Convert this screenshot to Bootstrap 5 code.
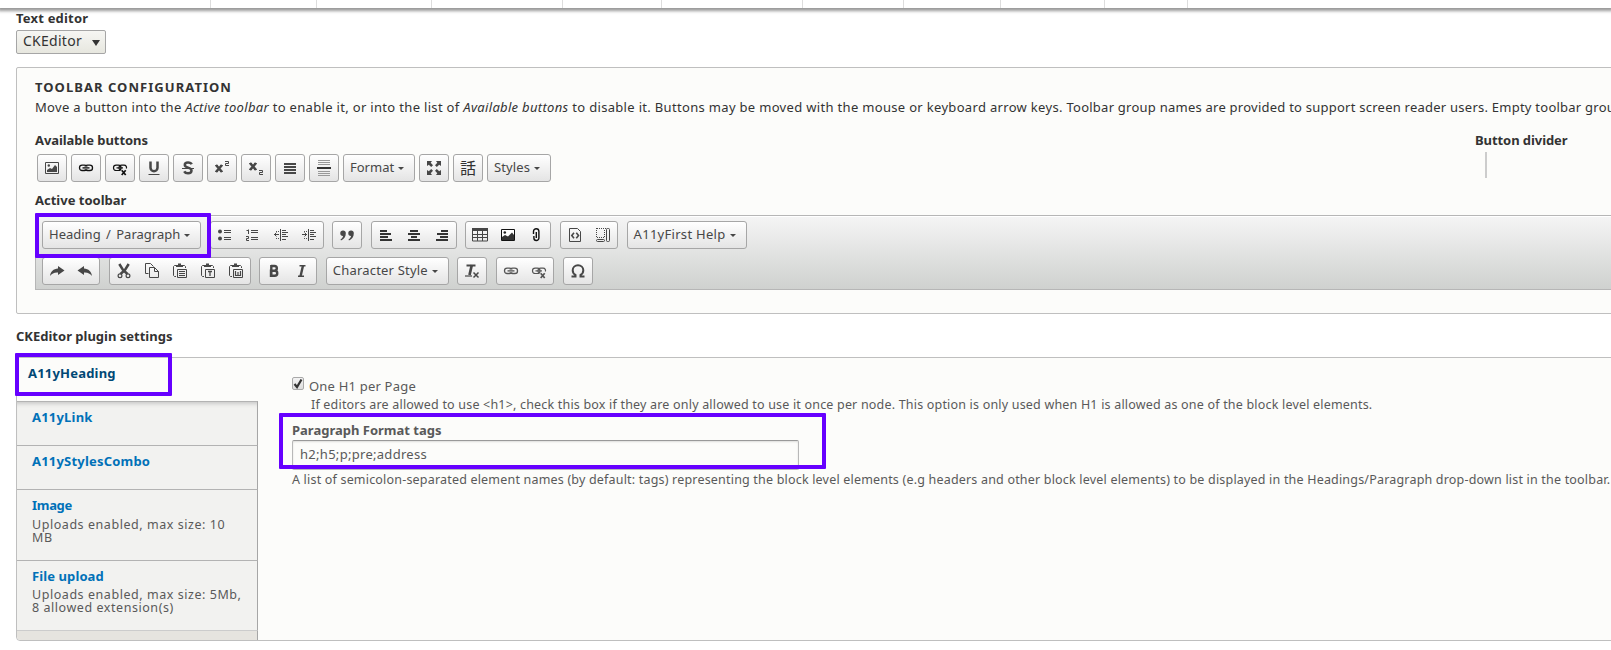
<!DOCTYPE html>
<html lang="en">
<head>
<meta charset="utf-8">
<title>Text editor configuration</title>
<link href="https://cdn.jsdelivr.net/npm/bootstrap@5.3.0/dist/css/bootstrap.min.css" rel="stylesheet">
<style>
body{font-family:"Noto Sans","Open Sans",sans-serif;font-size:13px;line-height:20px;color:#333;background:#fff;overflow:hidden;height:650px}
.top-tray{height:8px;background:#fff;box-shadow:0 1px 3px 2px #999;position:relative;z-index:2}
.top-tray span{border-right:1px solid #ddd;flex:none}
.page-body{padding-left:16px;white-space:nowrap}
.lbl{font-weight:700;font-size:13px;line-height:20px;height:20px}
.ls-caps{letter-spacing:1.046px}
.ls-1{letter-spacing:.1px}
.ls-2{letter-spacing:.2px}
.ls-3{letter-spacing:.29px}
.ls-n{letter-spacing:-.07px}
.ls-n3{letter-spacing:-.3px}
.slashed{word-spacing:2px}
.intro{letter-spacing:.322px}
.intro-tail{letter-spacing:.24px}
.editor-select{width:90px;height:24px;margin-top:2px;border:1px solid #a6a6a6;border-radius:2px;background:linear-gradient(#f6f6f3,#e7e7df);padding:0 4px 2px 6px;font-size:14px;letter-spacing:.27px}
.editor-select svg{margin-top:4px}
.config-box{margin-top:13px;height:247px;width:1620px;border:1px solid #bfbfbf;border-radius:2px;background:#fcfcfa;padding:9px 0 0 18px}
.button-pool{margin-top:13px;height:52px}
.divider-col{width:160px}
.divider-bar{width:2px;height:26px;background:#ccc;margin:2px 0 0 10px}
.ck-btn{height:28px;border:1px solid #a6a6a6;border-radius:3px;background:linear-gradient(#fff,#e4e4e4);flex:none;color:#474747}
.ck-btn svg{width:16px;height:16px;margin:0 6px;flex:none}
.ck-btn .dd{padding:0 0 2px 6px;width:100%}
.dd i{border:3px solid transparent;border-top:3px solid #474747;border-bottom:0;margin:2px 10px 0 0}
.w-64{width:64px}.w-72{width:72px}.w-120{width:120px}.w-123{width:123px}.w-159{width:159px}
.avail{gap:4px;margin:4px 0 0 2px}
.ck-bar{margin-top:5px;height:75px;border:1px solid #b6b6b6;border-right:0;background:linear-gradient(#f5f5f5,#cfd1cf);box-shadow:0 1px 0 #fff inset;padding:5px 0 0 6px;position:relative}
.ck-row{gap:8.6px;height:28px;margin-bottom:8px}
.hl{position:absolute;border:4px solid #60f;border-radius:1px;z-index:3;pointer-events:none}
.hl-combo{left:-1px;top:-3px;width:176px;height:45px}
.hl-tab{left:-2px;top:-5px;width:157px;height:43px}
.hl-field{left:-13px;top:-7px;width:547px;height:56px}
.plugin-title{margin-top:12px}
.tabs-box{margin-top:11px;width:1620px;height:284px;border:1px solid #bfbfbf;border-radius:2px 2px 2px 4px;background:#fcfcfa;position:relative}
.tab-list{width:241px;flex:none;background:#e6e4df;border-radius:0 0 0 4px}
.tab-item{height:44px;background:#f2f2f0;border-top:1px solid #b3b3b3;border-right:1px solid #a6a6a6;padding:5px 0 0 15px}
.tab-item.on{height:43px;border:0;padding-left:11px;background:#fcfcfa}
.tab-item.on+.tab-item{box-shadow:inset 0 5px 5px -4px #bbb}
.tab-item .lbl{color:#0071b8}
.tab-item.on .lbl{color:#004875}
.tab-item.tall{height:71px}
.tab-item.tall+.tall{height:70px}
.tab-note{font-size:12.5px;line-height:13px;color:#595959;margin-top:3px;letter-spacing:.55px}
.tall+.tall .tab-note{margin-top:2px}
.tab-end{height:10px;border-top:1px solid #ccc;border-right:1px solid #a6a6a6}
.panel{padding:18px 0 0 34px;color:#595959}
.chk{width:12px;height:13px;border:1px solid #a9a9a9;border-radius:2px;background:linear-gradient(#f3f3f3,#ddd);margin:1px 5px 0 0}
.chk svg{display:block}
.desc{font-size:12.5px;line-height:18px;height:16px;letter-spacing:.19px}
.desc-in{padding-left:19px}
.desc-field{margin-top:1px}
.field{margin-top:8px}
.tag-input{width:507px;height:30px;border:1px solid #b8b8b8;border-top-color:#999;border-radius:2px;background:#fcfcfa;padding:0 7px;line-height:27px;box-shadow:inset 0 1px 2px rgba(0,0,0,.125)}
</style>
</head>
<body>
<svg class="d-none">
<defs>
<g id="chain" fill="none"><rect x="1.500" y="5.200" width="7.500" height="5.300" rx="2.600" stroke-width="1.300"/><rect x="7" y="5.200" width="7.500" height="5.300" rx="2.600" stroke-width="1.300"/><path d="M4.500 7.900h7" stroke="#fff" stroke-width="2.600"/><path d="M4.500 7.900h7" stroke-width="1.400"/></g>
<g id="chain-cut" fill="none"><rect x="1.500" y="5.200" width="7.500" height="5.300" rx="2.600" stroke-width="1.200"/><path d="M8 9.800C6.300 9 6.500 5.200 9.500 5.200H12c2.200 0 3 2 2.300 3.300" stroke-width="1.200"/><path d="M4.500 7.900h6.500" stroke-width="1.200"/><path d="M9.700 10.200l4 4.800M13.700 10.200l-4 4.800" stroke-width="1.700"/></g>
</defs>
<symbol id="image" viewBox="0 0 16 16"><path d="M1.500 2.500h13v11h-13z" fill="none" stroke="#474747"/><circle cx="4.800" cy="5.500" r="1.200" fill="#474747"/><path d="M3 12v-2l3-2 2 1 3-4 2 2v5z" fill="#474747"/></symbol>
<symbol id="link" viewBox="0 0 16 16"><use href="#chain" stroke="#111"/></symbol>
<symbol id="unlink" viewBox="0 0 16 16"><use href="#chain-cut" stroke="#111"/></symbol>
<symbol id="link2" viewBox="0 0 16 16"><use href="#chain" stroke="#555"/></symbol>
<symbol id="unlink2" viewBox="0 0 16 16"><use href="#chain-cut" stroke="#555"/></symbol>
<symbol id="underline" viewBox="0 0 16 16"><path d="M4.500 1.500v6.200a3.500 3.500 0 0 0 7 0V1.500" fill="none" stroke="#474747" stroke-width="2.500"/><path d="M2.500 14.500h11" stroke="#474747"/></symbol>
<symbol id="strike" viewBox="0 0 16 16"><path d="M11.700 4.300C11 2.800 9.500 2.500 8 2.500c-2 0-3.200 1-3.200 2.500C4.800 8.300 11.500 7 11.500 10.500c0 1.800-1.500 2.800-3.500 2.800-1.600 0-3-.5-3.800-2" fill="none" stroke="#474747" stroke-width="2.500"/><path d="M2 8.500h12" stroke="#474747"/></symbol>
<symbol id="sup" viewBox="0 0 16 16"><path d="M2 5l6 7M8 5l-6 7" stroke="#474747" stroke-width="2.600"/><path d="M1.300 5.500H4M6 5.500h2.700M1.300 11.500H4M6 11.500h2.700" stroke="#474747"/><path d="M11 1.500h3.500v2h-3v2H15" fill="none" stroke="#474747"/></symbol>
<symbol id="sub" viewBox="0 0 16 16"><path d="M2 3l6 7M8 3l-6 7" stroke="#474747" stroke-width="2.600"/><path d="M1.300 3.500H4M6 3.500h2.700M1.300 9.500H4M6 9.500h2.700" stroke="#474747"/><path d="M11 10.500h3.500v2h-3v2H15" fill="none" stroke="#474747"/></symbol>
<symbol id="justify" viewBox="0 0 16 16"><path d="M2 4h12M2 7h12M2 10h12M2 13h12" stroke="#474747" stroke-width="2"/></symbol>
<symbol id="hr" viewBox="0 0 16 16"><path d="M2 .5h12M2 2.500h12M2 4.500h12M2 11.500h12M2 13.500h12M2 15.500h12" stroke="#999"/><path d="M1 8h14" stroke="#333" stroke-width="2"/></symbol>
<symbol id="max" viewBox="0 0 16 16"><path d="M1 1h5L4.700 2.800l2.300 2.400L5.200 7 2.800 4.700 1 6zM15 1h-5l1.300 1.800L9 5.200 10.800 7l2.400-2.300L15 6zM1 15h5l-1.300-1.800L7 10.800 5.200 9l-2.400 2.300L1 10zM15 15h-5l1.300-1.800L9 10.800 10.800 9l2.400 2.300L15 10z" fill="#474747"/></symbol>
<symbol id="lang" viewBox="0 0 16 16"><text x="0" y="13.700" font-size="16" font-family="'Noto Sans CJK JP',sans-serif" fill="#333">話</text></symbol>
<symbol id="ul" viewBox="0 0 16 16"><circle cx="3" cy="4.500" r="2" fill="#474747"/><circle cx="3" cy="11.500" r="2" fill="#474747"/><path d="M7 3.500h7M7 5.500h7M7 10.500h7M7 12.500h7" stroke="#474747"/></symbol>
<symbol id="ol" viewBox="0 0 16 16"><path d="M1.500 3.500h2M3.500 2.500v4.500M1 9.500h2.500v2h-2v2H4" fill="none" stroke="#474747"/><path d="M6 3.500h7M6 5.500h7M6 10.500h7M6 12.500h7" stroke="#474747"/></symbol>
<symbol id="outdent" viewBox="0 0 16 16"><path d="M7.500 2v12M9 3.500h4M9 5.500h6M9 7.500h4M9 9.500h6M9 12.500h4M1 7.500h5M3.500 5.500l-2 2 2 2" fill="none" stroke="#474747"/><path d="M3 4.500h4M3 11.500h4" stroke="#555" stroke-dasharray="1 1"/></symbol>
<symbol id="indent" viewBox="0 0 16 16"><path d="M7.500 2v12M9 3.500h4M9 5.500h6M9 7.500h4M9 9.500h6M9 12.500h4M1 7.500h5M3.500 5.500l2 2-2 2" fill="none" stroke="#474747"/><path d="M3 4.500h4M3 11.500h4" stroke="#555" stroke-dasharray="1 1"/></symbol>
<symbol id="quote" viewBox="0 0 16 16"><path d="M4 3.500A2.700 2.700 0 0 1 6.800 6.500C6.800 10 5 12 2 13.500l-.5-1C3.500 11 4 10 4 9A2.700 2.700 0 0 1 4 3.500zM12 3.500a2.700 2.700 0 0 1 2.800 3C14.800 10 13 12 10 13.500l-.5-1C11.500 11 12 10 12 9a2.700 2.700 0 0 1 0-5.500z" fill="#474747"/></symbol>
<symbol id="left" viewBox="0 0 16 16"><path d="M2 4h7M2 7h11M2 10h8M2 13h12" stroke="#333" stroke-width="1.900"/></symbol>
<symbol id="center" viewBox="0 0 16 16"><path d="M4 4h8M2 7h12M5 10h6M2 13h12" stroke="#333" stroke-width="1.900"/></symbol>
<symbol id="right" viewBox="0 0 16 16"><path d="M7 4h7M3 7h11M6 10h8M2 13h12" stroke="#333" stroke-width="1.900"/></symbol>
<symbol id="table" viewBox="0 0 16 16"><path d="M0 1h16v3H0z" fill="#474747"/><path d="M.5 2v12h15V2M.5 7.500h15M.5 10.500h15M5.500 3v11M10.500 3v11" fill="none" stroke="#474747"/></symbol>
<symbol id="image2" viewBox="0 0 16 16"><path d="M1.500 2.500h13v11h-13z" fill="#fff" stroke="#111"/><circle cx="4.800" cy="5.500" r="1.300" fill="#222"/><path d="M2 13v-3l3-2 3 1.500 4-4 2 2.500v5z" fill="#333"/></symbol>
<symbol id="clip" viewBox="0 0 16 16"><path d="M5.500 7V4.500a2.700 2.700 0 0 1 5.400 0V11a2.500 2.500 0 0 1-5 0V9M8.300 5v6" fill="none" stroke="#111" stroke-width="1.400"/></symbol>
<symbol id="source" viewBox="0 0 16 16"><path d="M2.500 1.500h8l3 3v10h-11z" fill="none" stroke="#474747"/><path d="M7 5.800L4.800 8.500 7 11.200M9.300 5.800l2.200 2.700-2.200 2.700" fill="none" stroke="#474747" stroke-width="1.600"/></symbol>
<symbol id="blocks" viewBox="0 0 16 16"><path d="M2 1.500h9M2 10.500h8M1.500 1v10M9.500 3v8" fill="none" stroke="#474747" stroke-dasharray="1 1"/><rect x="11.500" y="1.500" width="3" height="13" rx="1" fill="none" stroke="#474747"/><rect x="1.500" y="12.500" width="8" height="2" rx="1" fill="none" stroke="#474747"/></symbol>
<symbol id="redo" viewBox="0 0 16 16"><path d="M9 3l6.500 4.500L9 12V9.500C5 9.300 3 10.500 1 13 1.500 8.500 4.500 5.800 9 5.500z" fill="#474747"/></symbol>
<symbol id="undo" viewBox="0 0 16 16"><path d="M7 3L.5 7.500 7 12V9.500c4-.2 6 1 8 3.500-.5-4.500-3.500-7.200-8-7.500z" fill="#474747"/></symbol>
<symbol id="cut" viewBox="0 0 16 16"><path d="M3.300 1l3.700 6 4.500 4M12.700 1L9 7l-4.500 4" stroke="#474747" stroke-width="2.500" fill="none"/><circle cx="4" cy="12.700" r="1.900" fill="none" stroke="#474747" stroke-width="1.200"/><circle cx="12" cy="12.700" r="1.900" fill="none" stroke="#474747" stroke-width="1.200"/></symbol>
<symbol id="copy" viewBox="0 0 16 16"><path d="M4.500 10.500h-3v-10h5l3 3M5.500 4.500h5l4 4v6h-9zM10.500 4.500v4h4" fill="none" stroke="#474747"/></symbol>
<symbol id="board" viewBox="0 0 16 16"><path d="M4 2.500H2.500l-1 1v9l1 1H4M11 2.500h1.500l1 1V5" fill="none" stroke="#474747"/><path d="M4 2h2V.5h3V2h2v2H4z" fill="#474747"/><path d="M5.500 6.500h9v8h-9z" fill="none" stroke="#474747"/></symbol>
<symbol id="paste" viewBox="0 0 16 16"><use href="#board"/><path d="M7 8.500h6M7 10.500h6M7 12.500h6" stroke="#474747"/></symbol>
<symbol id="pastet" viewBox="0 0 16 16"><use href="#board"/><path d="M8 8.500h4M10 8v5" stroke="#474747" stroke-width="1.300"/></symbol>
<symbol id="pastew" viewBox="0 0 16 16"><use href="#board"/><path d="M7.500 8v4.500h5V8M10 9v3" stroke="#474747" fill="none" stroke-width="1.200"/></symbol>
<symbol id="bold" viewBox="0 0 16 16"><path d="M5 3h3.500a2.300 2.300 0 0 1 0 4.700H5M5 7.700h3.700a2.500 2.500 0 0 1 0 5.100H5zM5.300 2v11.800" fill="none" stroke="#474747" stroke-width="2.400"/></symbol>
<symbol id="italic" viewBox="0 0 16 16"><path d="M5.500 2.800h6M4 13.200h6" stroke="#474747" stroke-width="1.500"/><path d="M9 2.500L6.500 13.500" stroke="#474747" stroke-width="2.400"/></symbol>
<symbol id="clear" viewBox="0 0 16 16"><path d="M2.500 2.500h9" stroke="#474747" stroke-width="2"/><path d="M7.800 2L5.500 12" stroke="#474747" stroke-width="2.700"/><path d="M1 13h7" stroke="#474747" stroke-width="1.200"/><path d="M9.500 9.500l5 5M14.500 9.500l-5 5" stroke="#474747" stroke-width="1.500"/></symbol>
<symbol id="omega" viewBox="0 0 16 16"><path d="M1.500 13.500h4V12C3.500 11 2.700 9 2.700 7.300c0-3 2.300-5 5.300-5s5.300 2 5.300 5c0 1.700-.8 3.700-2.800 4.700v1.500h4" fill="none" stroke="#474747" stroke-width="2"/></symbol>
</svg>

<div class="top-tray d-flex">
<span style="width:211px"></span><span style="width:106px"></span><span style="width:115px"></span><span style="width:131px"></span><span style="width:99px"></span><span style="width:141px"></span><span style="width:101px"></span><span style="width:97px"></span><span style="width:104px"></span><span style="width:83px"></span>
</div>

<main class="page-body">
<div class="lbl ls-2">Text editor</div>
<div class="editor-select d-flex align-items-center justify-content-between"><span>CKEditor</span><svg width="10" height="8"><path d="M1 1h8L5 7z" fill="#333"/></svg></div>

<section class="config-box">
<div class="lbl ls-caps">TOOLBAR CONFIGURATION</div>
<div class="intro">Move a button into the <em>Active toolbar</em> to enable it, or into the list of <em>Available buttons</em> to disable it. Buttons may be moved with the mouse or keyboard arrow keys. <span class="intro-tail">Toolbar group names are provided to support screen reader users. Empty toolbar groups</span></div>
<div class="button-pool d-flex justify-content-between">
<div>
<div class="lbl ls-n">Available buttons</div>
<div class="avail d-flex">
<div class="ck-btn d-flex align-items-center"><svg><use href="#image"/></svg></div>
<div class="ck-btn d-flex align-items-center"><svg><use href="#link"/></svg></div>
<div class="ck-btn d-flex align-items-center"><svg><use href="#unlink"/></svg></div>
<div class="ck-btn d-flex align-items-center"><svg><use href="#underline"/></svg></div>
<div class="ck-btn d-flex align-items-center"><svg><use href="#strike"/></svg></div>
<div class="ck-btn d-flex align-items-center"><svg><use href="#sup"/></svg></div>
<div class="ck-btn d-flex align-items-center"><svg><use href="#sub"/></svg></div>
<div class="ck-btn d-flex align-items-center"><svg><use href="#justify"/></svg></div>
<div class="ck-btn d-flex align-items-center"><svg><use href="#hr"/></svg></div>
<div class="ck-btn d-flex align-items-center w-72"><div class="dd d-flex align-items-center justify-content-between"><span>Format</span><i></i></div></div>
<div class="ck-btn d-flex align-items-center"><svg><use href="#max"/></svg></div>
<div class="ck-btn d-flex align-items-center"><svg><use href="#lang"/></svg></div>
<div class="ck-btn d-flex align-items-center w-64"><div class="dd d-flex align-items-center justify-content-between"><span class="ls-1">Styles</span><i></i></div></div>
</div>
</div>
<div class="divider-col"><div class="lbl ls-n">Button divider</div><div class="divider-bar"></div></div>
</div>
<div class="lbl mt-2">Active toolbar</div>
<div class="ck-bar">
<div class="ck-row d-flex">
<div class="ck-btn d-flex align-items-center w-159"><div class="dd d-flex align-items-center justify-content-between"><span class="slashed">Heading / Paragraph</span><i></i></div></div>
<div class="ck-btn d-flex align-items-center"><svg><use href="#ul"/></svg><svg><use href="#ol"/></svg><svg><use href="#outdent"/></svg><svg><use href="#indent"/></svg></div>
<div class="ck-btn d-flex align-items-center"><svg><use href="#quote"/></svg></div>
<div class="ck-btn d-flex align-items-center"><svg><use href="#left"/></svg><svg><use href="#center"/></svg><svg><use href="#right"/></svg></div>
<div class="ck-btn d-flex align-items-center"><svg><use href="#table"/></svg><svg><use href="#image2"/></svg><svg><use href="#clip"/></svg></div>
<div class="ck-btn d-flex align-items-center"><svg><use href="#source"/></svg><svg><use href="#blocks"/></svg></div>
<div class="ck-btn d-flex align-items-center w-120"><div class="dd d-flex align-items-center justify-content-between"><span class="ls-3">A11yFirst Help</span><i></i></div></div>
</div>
<div class="ck-row d-flex">
<div class="ck-btn d-flex align-items-center"><svg><use href="#redo"/></svg><svg><use href="#undo"/></svg></div>
<div class="ck-btn d-flex align-items-center"><svg><use href="#cut"/></svg><svg><use href="#copy"/></svg><svg><use href="#paste"/></svg><svg><use href="#pastet"/></svg><svg><use href="#pastew"/></svg></div>
<div class="ck-btn d-flex align-items-center"><svg><use href="#bold"/></svg><svg><use href="#italic"/></svg></div>
<div class="ck-btn d-flex align-items-center w-123"><div class="dd d-flex align-items-center justify-content-between"><span class="ls-2">Character Style</span><i></i></div></div>
<div class="ck-btn d-flex align-items-center"><svg><use href="#clear"/></svg></div>
<div class="ck-btn d-flex align-items-center"><svg><use href="#link2"/></svg><svg><use href="#unlink2"/></svg></div>
<div class="ck-btn d-flex align-items-center"><svg><use href="#omega"/></svg></div>
</div>
<div class="hl hl-combo"></div>
</div>
</section>

<div class="lbl plugin-title">CKEditor plugin settings</div>
<section class="tabs-box d-flex">
<nav class="tab-list">
<div class="tab-item on"><div class="lbl ls-2">A11yHeading</div></div>
<div class="tab-item"><div class="lbl ls-2">A11yLink</div></div>
<div class="tab-item"><div class="lbl ls-2">A11yStylesCombo</div></div>
<div class="tab-item tall"><div class="lbl ls-n3">Image</div><div class="tab-note">Uploads enabled, max size: 10<br>MB</div></div>
<div class="tab-item tall"><div class="lbl ls-1">File upload</div><div class="tab-note">Uploads enabled, max size: 5Mb,<br>8 allowed extension(s)</div></div>
<div class="tab-end"></div>
</nav>
<div class="panel">
<div class="d-flex"><div class="chk"><svg width="10" height="11"><path d="M1.500 6l2.500 3L8.500 1.500" fill="none" stroke="#333" stroke-width="2.200"/></svg></div><span class="ls-2">One H1 per Page</span></div>
<div class="desc desc-in">If editors are allowed to use &lt;h1&gt;, check this box if they are only allowed to use it once per node. This option is only used when H1 is allowed as one of the block level elements.</div>
<div class="field position-relative">
<div class="lbl">Paragraph Format tags</div>
<div class="tag-input ls-3">h2;h5;p;pre;address</div>
<div class="hl hl-field"></div>
</div>
<div class="desc desc-field">A list of semicolon-separated element names (by default: tags) representing the block level elements (e.g headers and other block level elements) to be displayed in the Headings/Paragraph drop-down list in the toolbar.</div>
</div>
<div class="hl hl-tab"></div>
</section>
</main>
<script src="https://cdn.jsdelivr.net/npm/bootstrap@5.3.0/dist/js/bootstrap.bundle.min.js"></script>
</body>
</html>
